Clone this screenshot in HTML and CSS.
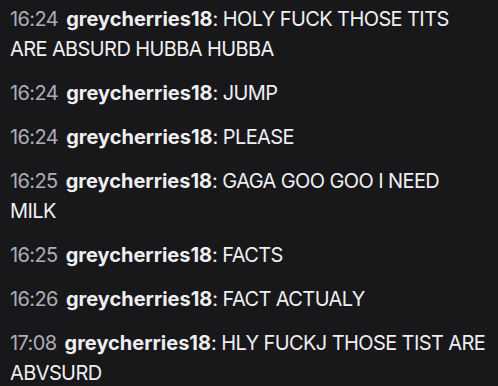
FILE: index.html
```html
<!DOCTYPE html>
<html>
<head>
<meta charset="utf-8">
<link rel="stylesheet" href="styles.css">
</head>
<body>
<div class="chat">
  <div class="msg"><span class="time">16:24</span> <span class="user">greycherries18</span><span class="colon">:</span> <span class="text">HOLY FUCK THOSE TITS ARE ABSURD HUBBA HUBBA</span></div>
  <div class="msg"><span class="time">16:24</span> <span class="user">greycherries18</span><span class="colon">:</span> <span class="text">JUMP</span></div>
  <div class="msg"><span class="time">16:24</span> <span class="user">greycherries18</span><span class="colon">:</span> <span class="text">PLEASE</span></div>
  <div class="msg"><span class="time">16:25</span> <span class="user">greycherries18</span><span class="colon">:</span> <span class="text">GAGA GOO GOO I NEED MILK</span></div>
  <div class="msg"><span class="time">16:25</span> <span class="user">greycherries18</span><span class="colon">:</span> <span class="text">FACTS</span></div>
  <div class="msg"><span class="time">16:26</span> <span class="user">greycherries18</span><span class="colon">:</span> <span class="text">FACT ACTUALY</span></div>
  <div class="msg"><span class="time">17:08</span> <span class="user">greycherries18</span><span class="colon">:</span> <span class="text">HLY FUCKJ THOSE TIST ARE ABVSURD</span></div>
</div>
</body>
</html>
```
FILE: styles.css
```css
html, body {
  margin: 0;
  padding: 0;
  background: #18181b;
  height: 100%;
}
body {
  font-family: Inter, "Noto Sans", sans-serif;
  font-size: 20px;
  line-height: 30px;
  color: #efeff1;
  letter-spacing: -0.6px;
}
.chat {
  display: flex;
  flex-direction: column;
  gap: 14px;
  padding: 4px 9.5px 0 10px;
}
.msg {
  word-wrap: break-word;
}
.time {
  color: #adadb8;
  margin-right: 3px;
}
.user {
  font-weight: 700;
  color: #efeff1;
  letter-spacing: 0;
}
.colon {
  color: #efeff1;
}
.text {
  color: #efeff1;
}
```
